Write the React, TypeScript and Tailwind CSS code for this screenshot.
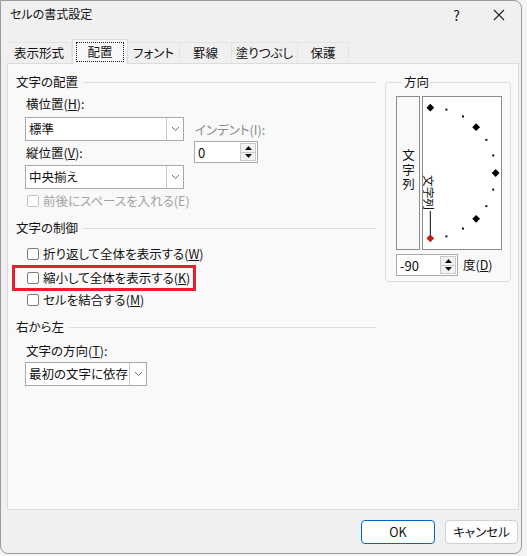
import React from "react"

const font = "font-['Noto_Sans_CJK_JP','Noto_Sans',sans-serif] [font-feature-settings:'palt']"

function Chevron() {
  return (
    <svg width="9" height="6" viewBox="0 0 9 6">
      <polyline points="1,1 4.5,4.5 8,1" fill="none" stroke="#6b6b6b" strokeWidth="1" />
    </svg>
  )
}

function Select({ value, width }: { value: string; width: string }) {
  return (
    <div className={`flex h-[24px] ${width} border border-[#a9a9a9] bg-white`}>
      <div className="flex-1 flex items-center pl-[3px] text-[12.5px] text-[#111] whitespace-nowrap overflow-hidden">
        {value}
      </div>
      <div className="w-[17px] border-l border-[#c8c8c8] flex items-center justify-center">
        <Chevron />
      </div>
    </div>
  )
}

function Spin({ value, width }: { value: string; width: string }) {
  return (
    <div className={`flex h-[22px] ${width} border border-[#a9a9a9] bg-white`}>
      <div className="flex-1 flex items-center pl-[3px] text-[13px] text-[#111]">{value}</div>
      <div className="w-[17px] flex flex-col py-[1px] pr-[1px]">
        <div className="flex-1 flex items-center justify-center border border-[#c9c9c9] bg-[#f3f3f3]">
          <svg width="7" height="4" viewBox="0 0 7 4"><polygon points="0,4 3.5,0 7,4" fill="#111" /></svg>
        </div>
        <div className="flex-1 flex items-center justify-center border border-t-0 border-[#c9c9c9] bg-[#f3f3f3]">
          <svg width="7" height="4" viewBox="0 0 7 4"><polygon points="0,0 3.5,4 7,0" fill="#111" /></svg>
        </div>
      </div>
    </div>
  )
}

function Check({ label, disabled }: { label: React.ReactNode; disabled?: boolean }) {
  return (
    <div className="flex items-center h-full pl-[2px] gap-[4px]">
      <span
        className={`w-[12px] h-[12px] rounded-[2px] border bg-white ${
          disabled ? "border-[#c4c4c4]" : "border-[#7c7c7c]"
        }`}
      />
      <span className={`text-[12.5px] ${disabled ? "text-[#a2a2a2]" : "text-[#111]"}`}>{label}</span>
    </div>
  )
}

function GroupHeader({ title, className }: { title: string; className: string }) {
  return (
    <div className={`flex items-center gap-[5px] h-[20px] pr-[1px] ${className}`}>
      <span className="text-[#111] text-[12.5px]">{title}</span>
      <div className="flex-1 h-px bg-[#dcdcdc]" />
    </div>
  )
}

function Dial() {
  const diamonds: [number, number, string][] = [
    [7.5, 10, "#000"],
    [54.5, 30, "#000"],
    [74.5, 77, "#000"],
    [54.5, 124, "#000"],
    [7.5, 144, "#c0201c"],
  ]
  const dots = [
    [24, 12], [41, 19], [65, 43], [72, 59],
    [72, 94], [65, 111], [41, 134], [24, 142],
  ]
  return (
    <svg width="80" height="154" viewBox="0 0 80 154" className="border border-[#8c8c8c] bg-white">
      {dots.map(([x, y], i) => (
        <rect key={i} x={x - 1} y={y - 1} width="2" height="2" fill="#000" />
      ))}
      <line x1="7.5" y1="116" x2="7.5" y2="141" stroke="#000" strokeWidth="1" />
      <text
        x="0"
        y="0"
        transform="translate(1.5 79) rotate(90)"
        fontSize="12"
        fontFamily="Noto Sans CJK JP, sans-serif"
        fill="#111"
      >
        文字列
      </text>
      {diamonds.map(([x, y, c], i) => (
        <polygon key={i} points={`${x},${y - 4} ${x + 4},${y} ${x},${y + 4} ${x - 4},${y}`} fill={c} />
      ))}
    </svg>
  )
}

const tabs = [
  { label: "表示形式", w: "w-[65px]" },
  { label: "配置", w: "w-[56px]", active: true },
  { label: "フォント", w: "w-[52px]" },
  { label: "罫線", w: "w-[52px]" },
  { label: "塗りつぶし", w: "w-[66px]" },
  { label: "保護", w: "w-[51px]" },
]

export default function App() {
  return (
    <div className={`w-[527px] h-[556px] bg-[#f4f4f4] text-[12px] leading-none ${font}`}>
      <div className="w-[522px] h-[554px] bg-[#f0f0f0] border border-[#9a9a9a] rounded-tr-[8px] rounded-b-[8px] flex flex-col">
        {/* Title bar */}
        <div className="h-[38px] flex items-start pt-[7px] pl-[9px] pr-[16px]">
          <span className="text-[12px] text-[#111]">セルの書式設定</span>
          <span className="ml-auto mr-[33px] text-[14px] text-[#111]">?</span>
          <svg width="12" height="12" viewBox="0 0 12 12" className="mt-[1px]">
            <path d="M1 1 L11 11 M11 1 L1 11" stroke="#222" strokeWidth="1.1" />
          </svg>
        </div>

        {/* Tabs */}
        <div className="h-[25px] pl-[6px] flex items-end -mb-px relative z-10">
          {tabs.map((t) =>
            t.active ? (
              <div
                key={t.label}
                className={`${t.w} h-[25px] bg-[#f9f9f9] border border-b-0 border-[#dcdcdc] pt-[2px] px-[3px]`}
              >
                <div className="h-[20px] border border-dotted border-[#222] flex items-center justify-center text-[12.5px] text-[#111]">
                  {t.label}
                </div>
              </div>
            ) : (
              <div
                key={t.label}
                className={`${t.w} h-[22px] border-r border-t border-[#e4e4e4] flex items-center justify-center text-[12.5px] text-[#111]`}
              >
                {t.label}
              </div>
            )
          )}
        </div>

        {/* Panel */}
        <div className="ml-[6px] w-[512px] h-[447px] bg-[#f9f9f9] border border-[#dcdcdc] flex">
          {/* Left column */}
          <div className="w-[369px] pl-[8px] flex flex-col">
            <GroupHeader title="文字の配置" className="mt-[8px]" />
            <div className="flex pl-[9px]">
              <div className="w-[159px] flex flex-col">
                <div className="h-[20px] mt-[2px] flex items-center pl-[1px] text-[12.5px] text-[#111]">
                  横位置(<span className="underline">H</span>):
                </div>
                <div className="mt-[3px]">
                  <Select value="標準" width="w-[159px]" />
                </div>
                <div className="h-[20px] mt-[2px] flex items-center pl-[1px] text-[12.5px] text-[#111]">
                  縦位置(<span className="underline">V</span>):
                </div>
                <div className="mt-[2px]">
                  <Select value="中央揃え" width="w-[159px]" />
                </div>
              </div>
              <div className="ml-[10px] flex flex-col">
                <div className="h-[18px] mt-[29px] flex items-center pl-[1px] text-[12.5px] text-[#8a8a8a]">
                  インデント(I):
                </div>
                <div className="mt-[2px]">
                  <Spin value="0" width="w-[64px]" />
                </div>
              </div>
            </div>
            <div className="h-[20px] mt-[2px] pl-[9px]">
              <Check label="前後にスペースを入れる(E)" disabled />
            </div>

            <GroupHeader title="文字の制御" className="mt-[7px]" />
            <div className="h-[20px] mt-[6px] pl-[9px]">
              <Check
                label={
                  <>
                    折り返して全体を表示する(<span className="underline">W</span>)
                  </>
                }
              />
            </div>
            <div className="h-[26px] mt-[1px] ml-[-4px] w-[184px] border-[3px] border-[#e3202b] pl-[10px]">
              <Check
                label={
                  <>
                    縮小して全体を表示する(<span className="underline">K</span>)
                  </>
                }
              />
            </div>
            <div className="h-[18px] pl-[9px]">
              <Check
                label={
                  <>
                    セルを結合する(<span className="underline">M</span>)
                  </>
                }
              />
            </div>

            <GroupHeader title="右から左" className="mt-[8px]" />
            <div className="h-[18px] mt-[5px] pl-[10px] flex items-center text-[12.5px] text-[#111]">
              文字の方向(<span className="underline">T</span>):
            </div>
            <div className="mt-[2px] pl-[9px]">
              <Select value="最初の文字に依存" width="w-[122px]" />
            </div>
          </div>

          {/* Orientation group */}
          <fieldset className="ml-[8px] mt-[9px] w-[126px] h-[209px] border border-[#dcdcdc] rounded-[3px] pl-[10px]">
            <legend className="ml-[6px] px-[2px] h-[18px] leading-[18px] text-[12.5px] text-[#111]">方向</legend>
            <div className="flex gap-[2px] mt-[5px]">
              <div className="w-[24px] h-[154px] border border-[#8c8c8c] bg-[#f9f9f9] flex items-center justify-center pb-[4px]">
                <span className="[writing-mode:vertical-rl] tracking-[2px] leading-[14px] text-[12.5px] text-[#111]">
                  文字列
                </span>
              </div>
              <Dial />
            </div>
            <div className="flex items-center mt-[4px]">
              <Spin value="-90" width="w-[62px]" />
              <span className="ml-[5px] text-[12.5px] text-[#111]">
                度(<span className="underline">D</span>)
              </span>
            </div>
          </fieldset>
        </div>

        {/* Buttons */}
        <div className="flex justify-end gap-[10px] mt-[10px] pr-[3px]">
          <button className="w-[74px] h-[24px] rounded-[4px] border border-[#0067c0] bg-white text-[12.5px] text-[#111]">
            OK
          </button>
          <button className="w-[73px] h-[24px] rounded-[4px] border border-[#d0d0d0] bg-[#fdfdfd] text-[12.5px] text-[#111]">
            キャンセル
          </button>
        </div>
      </div>
    </div>
  )
}
